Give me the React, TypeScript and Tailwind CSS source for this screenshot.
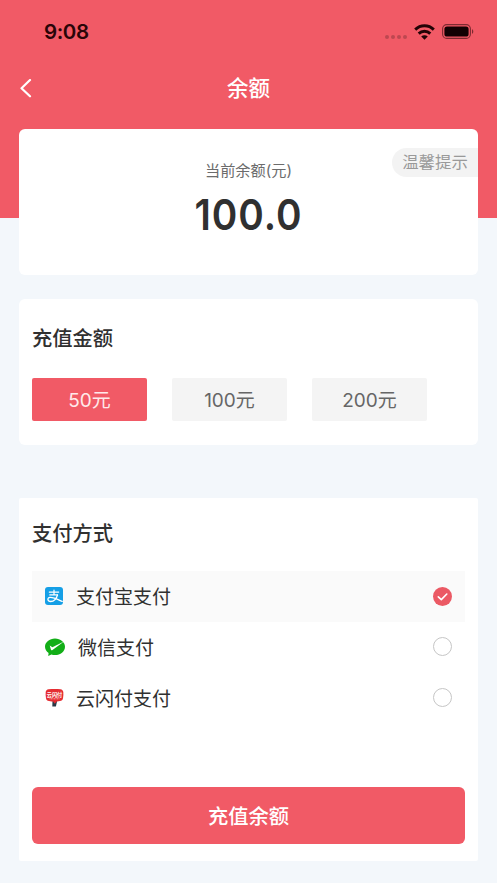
import { useState } from "react";

const amounts = ["50元", "100元", "200元"];

function StatusBar() {
  return (
    <div className="flex h-16 items-center justify-between pl-[44px] pr-[23px]">
      <span className="text-[20.5px] leading-6 font-semibold tracking-[-0.4px] text-[#2a0508]">9:08</span>
      <div className="flex items-center">
        <div className="mt-[9px] flex gap-[2px]">
          <i className="size-1 rounded-full bg-[#bd4751]" />
          <i className="size-1 rounded-full bg-[#bd4751]" />
          <i className="size-1 rounded-full bg-[#bd4751]" />
          <i className="size-1 rounded-full bg-[#bd4751]" />
        </div>
        <svg className="-mt-px ml-[7px] h-[16px] w-[21px]" viewBox="0 0 21 16" fill="none" stroke="#220306" strokeWidth="2.9">
          <path d="M1.2 5.6C6.4.5 14.6.5 19.8 5.6" />
          <path d="M4.7 9.6c3.3-3.200 8.300-3.200 11.600 0" />
          <path d="M7.200 12.400c1.900-1.700 4.700-1.700 6.600 0L10.500 15.700z" fill="#220306" stroke="none" />
        </svg>
        <svg className="-mt-[2px] ml-[7px] h-[15px] w-[32px]" viewBox="0 0 32 15" fill="none">
          <rect x=".6" y=".6" width="27.800" height="13.800" rx="4.200" stroke="#7d2a31" strokeWidth="1.100" />
          <rect x="2.400" y="2.400" width="24.200" height="10.200" rx="2.600" fill="#120103" />
          <path d="M30 5.200c1.700.7 1.700 3.900 0 4.600z" fill="#7d2a31" />
        </svg>
      </div>
    </div>
  );
}

function AlipayIcon() {
  return (
    <svg className="-mt-px size-[18px]" viewBox="0 0 18 18" fill="none">
      <rect width="18" height="18" rx="3" fill="#159fe6" />
      <g stroke="#fff" strokeLinecap="round">
        <path d="M4.300 5.100h9.400M9 3v4.700M4.800 7.900h7.700" strokeWidth="1.200" />
        <path d="M12.500 8c-1.200 4.200-4 6.500-6.800 6.500-3.300 0-3.800-3.800-.7-4.100 3.100-.3 7 1.700 12.200 4" strokeWidth="1.300" />
      </g>
    </svg>
  );
}

function WechatPayIcon() {
  return (
    <svg className="-mt-px h-[18px] w-[20px]" viewBox="0 0 20 18" fill="none">
      <path d="M10 .5c5.500 0 10 3.700 10 8.300s-4.500 8.300-10 8.300c-1.300 0-2.500-.2-3.600-.6L3.200 18l.4-2.900C1.400 13.600 0 11.300 0 8.800 0 4.200 4.500.5 10 .5z" fill="#12ae17" />
      <path d="M4.700 7.600 7.400 9.300l11.600-5.700L7.500 12.100q-1 .7-1.500-.4z" fill="#fff" />
    </svg>
  );
}

function QuickPassIcon() {
  return (
    <svg className="-mt-[2px] h-[18px] w-[19px]" viewBox="0 0 19 18" fill="none">
      <path d="M7.500 12h4.600l-1.200 5.500H7.300z" fill="#293846" />
      <path d="M3.500.3C8 0 12 0 15.500.3c1.600.2 2.600 1.300 2.800 2.800.2 2 .1 4.100-.3 6.100-.3 1.700-1.400 2.600-3 2.900-4 .8-7.500.8-11 0-1.600-.3-2.700-1.200-3-2.900C.6 7.200.5 5.100.7 3.100.9 1.600 1.900.5 3.500.3z" fill="#e52d32" />
      <path d="m8 12.500 4.200-1-2.300 3.300z" fill="#e52d32" />
      <text x="9.500" y="7.600" textAnchor="middle" fill="#fff" fontSize="5.200" fontWeight="700" textLength="15.500" lengthAdjust="spacingAndGlyphs">云闪付</text>
      <path d="M4.500 9.800h10" stroke="#ffc1c2" strokeWidth=".8" strokeDasharray="1 .5" />
    </svg>
  );
}

const methods = [
  { name: "支付宝支付", icon: <AlipayIcon />, gap: "gap-[13px]" },
  { name: "微信支付", icon: <WechatPayIcon />, gap: "gap-[13px]" },
  { name: "云闪付支付", icon: <QuickPassIcon />, gap: "gap-[12px]" },
];

export default function App() {
  const [amount, setAmount] = useState(0);
  const [method, setMethod] = useState(0);

  return (
    <div className="h-[883px] w-[497px] overflow-hidden bg-[#f3f7fb] font-['Inter','Noto_Sans_CJK_SC',sans-serif] text-[#303030]">
      <header className="h-[218px] bg-[#f15a66]">
        <StatusBar />
        <div className="grid h-12 grid-cols-[60px_1fr_60px] items-center text-white">
          <button aria-label="返回" className="pl-[20px]">
            <svg className="h-[19px] w-[12px]" viewBox="0 0 12 19" fill="none" stroke="currentColor" strokeWidth="2.2" strokeLinecap="round" strokeLinejoin="round">
              <path d="M10 1 1.500 9.200 10 17.300" />
            </svg>
          </button>
          <h1 className="text-center text-[21.500px] leading-8 font-medium">余额</h1>
        </div>
      </header>

      <main className="-mt-[89px] px-[19px]">
        <section className="relative h-[146px] rounded-md bg-white pt-[30px] text-center">
          <p className="text-[15.200px] leading-6 text-[#6c6c6c]">当前余额(元)</p>
          <p className="mt-[6px] scale-x-90 text-[43px] leading-[50px] font-semibold tracking-[1.1px]">100.0</p>
          <span className="absolute top-[19px] right-0 h-[29px] w-[86px] rounded-l-full bg-[#f3f3f3] text-[16.400px] leading-[29px] text-[#999]">温馨提示</span>
        </section>

        <section className="mt-6 h-[146px] rounded-md bg-white px-[13px] pt-[24px]">
          <h2 className="text-[20.300px] leading-8 font-medium">充值金额</h2>
          <div className="mt-[23px] flex gap-[25px]">
            {amounts.map((item, i) => (
              <button
                key={item}
                onClick={() => setAmount(i)}
                className={`h-[43px] w-[115px] rounded-[2px] pt-[3px] text-[19px] ${i === amount ? "bg-[#f15a66] text-[#ffe9ea]" : "bg-[#f4f4f4] text-[#666]"}`}
              >
                {item}
              </button>
            ))}
          </div>
        </section>

        <section className="mt-[53px] h-[363px] rounded-[2px] bg-white px-[13px] pt-[20px]">
          <h2 className="text-[20.300px] leading-8 font-medium">支付方式</h2>
          <div className="mt-[21px]">
            {methods.map((item, i) => (
              <button
                key={item.name}
                onClick={() => setMethod(i)}
                className={`flex h-[51px] w-full items-center px-[13px] ${item.gap} ${i === method ? "bg-[#fafafa]" : "bg-white"}`}
              >
                {item.icon}
                <span className="flex-1 pt-[4px] text-left text-[19px]">{item.name}</span>
                {i === method ? (
                  <svg className="size-[19px]" viewBox="0 0 19 19" fill="none">
                    <circle cx="9.500" cy="9.500" r="9.500" fill="#eb5964" />
                    <path d="m5.300 9.800 3 2.800L13.800 7" stroke="#fff" strokeWidth="1.600" strokeLinecap="round" strokeLinejoin="round" />
                  </svg>
                ) : (
                  <span className="-mt-[2px] size-[19px] rounded-full border border-[#c6c6c6]" />
                )}
              </button>
            ))}
          </div>
          <button className="mt-[63px] h-[57px] w-full rounded-md bg-[#f15a66] pt-[3px] text-[20.300px] font-medium text-white">充值余额</button>
        </section>
      </main>
    </div>
  );
}
